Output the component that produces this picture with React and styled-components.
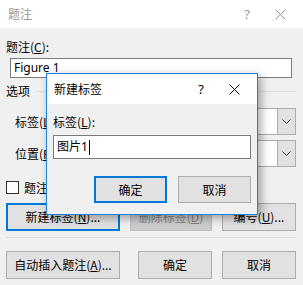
import React from 'react'
import styled, {createGlobalStyle} from 'styled-components'

const GlobalStyle = createGlobalStyle`
    html, body {
        margin: 0;
        padding: 0;
        background: #f0f0f0;
    }
    body {
        font-family: "Segoe UI", "Noto Sans", "Noto Sans CJK SC", sans-serif;
        font-size: 12px;
        color: #000;
    }
`

const Window = styled.div`
    position: relative;
    width: 303px;
    height: 285px;
    overflow: hidden;
    background: #f0f0f0;
`

const TitleBar = styled.div`
    display: flex;
    align-items: center;
    height: ${props => props.h}px;
    background: #fff;
    padding-left: ${props => props.pad}px;
    color: ${props => props.active ? '#000' : '#999'};
`

const TitleText = styled.span`
    flex: 1;
    font-family: "Noto Sans CJK SC", sans-serif;
    font-size: 12px;
    line-height: 16px;
`

const TitleButton = styled.span`
    display: flex;
    align-items: center;
    justify-content: center;
    width: ${props => props.w}px;
    font-size: 13px;
    line-height: 16px;
    font-family: "Noto Sans", sans-serif;
`

const Body = styled.div`
    display: flex;
    flex-direction: column;
    padding: 0 7px 0 6px;
`

const Label = styled.div`
    font-family: "Noto Sans CJK SC", sans-serif;
    line-height: 16px;
    margin-top: ${props => props.mt || 0}px;
    margin-left: ${props => props.ml || 0}px;
`

const TextInput = styled.div`
    box-sizing: border-box;
    height: ${props => props.h}px;
    width: ${props => props.w}px;
    margin-top: ${props => props.mt}px;
    margin-left: ${props => props.ml || 0}px;
    background: #fff;
    border: 1px solid #7a7a7a;
    display: flex;
    align-items: center;
    padding-left: 3px;
    font-family: "Noto Sans", "Noto Sans CJK SC", sans-serif;
    font-size: 12px;
    line-height: 16px;
`

const Caret = styled.span`
    display: inline-block;
    width: 1px;
    height: 15px;
    background: #000;
    margin-left: 1px;
`

const GroupHead = styled.div`
    display: flex;
    align-items: center;
    gap: 6px;
    margin-top: 5px;
    font-family: "Noto Sans CJK SC", sans-serif;
    line-height: 16px;
    &::after {
        content: "";
        flex: 1;
        height: 1px;
        background: #dcdcdc;
    }
`

const SelectRow = styled.div`
    display: flex;
    align-items: center;
    height: 27px;
    margin-top: ${props => props.mt}px;
    padding-left: 9px;
`

const SelectLabel = styled.span`
    width: 55px;
    font-family: "Noto Sans CJK SC", sans-serif;
    line-height: 16px;
`

const SelectBox = styled.div`
    flex: 1;
    display: flex;
    height: 100%;
    border: 1px solid #adadad;
    box-sizing: border-box;
    background: #fff;
`

const SelectArrow = styled.div`
    margin-left: auto;
    width: 17px;
    background: #e1e1e1;
    border-left: 1px solid #adadad;
    display: flex;
    align-items: center;
    justify-content: center;
`

const CheckRow = styled.label`
    display: flex;
    align-items: center;
    gap: 5px;
    margin-top: 14px;
    height: 13px;
    font-family: "Noto Sans CJK SC", sans-serif;
    line-height: 16px;
`

const CheckBox = styled.span`
    box-sizing: border-box;
    width: 13px;
    height: 13px;
    border: 1px solid #333;
    background: #fff;
`

const ButtonRow = styled.div`
    display: flex;
    margin-top: ${props => props.mt}px;
    justify-content: ${props => props.justify || 'flex-start'};
    gap: ${props => props.gap || 0}px;
`

const Button = styled.div`
    box-sizing: border-box;
    width: ${props => props.w}px;
    height: ${props => props.h || 28}px;
    margin-left: ${props => props.ml || 0}px;
    display: flex;
    align-items: center;
    justify-content: center;
    background: ${props => props.disabled ? '#cccccc' : '#e1e1e1'};
    color: ${props => props.disabled ? '#838383' : '#000'};
    border: ${props => props.primary ? '2px solid #0078d7' : props.disabled ? '1px solid #bfbfbf' : '1px solid #adadad'};
    font-family: "Noto Sans CJK SC", sans-serif;
    font-size: 12px;
    line-height: 16px;
    white-space: nowrap;
`

const Separator = styled.div`
    height: 1px;
    background: #dcdcdc;
    margin-top: 6px;
`

const SubDialog = styled.div`
    position: absolute;
    left: 46px;
    top: 73px;
    width: 212px;
    height: 142px;
    box-sizing: border-box;
    border: 1px solid #1883d7;
    background: #f0f0f0;
    box-shadow: 3px 3px 9px rgba(0, 0, 0, 0.35);
    display: flex;
    flex-direction: column;
`

const SubBody = styled.div`
    display: flex;
    flex-direction: column;
    padding: 0 6px;
`

const CloseIcon = ({color}) => (
    <svg width="11" height="11" viewBox="0 0 11 11">
        <path d="M0.5 0.5 L10.5 10.5 M10.5 0.5 L0.5 10.5" stroke={color} strokeWidth="1" fill="none" />
    </svg>
)

const Chevron = () => (
    <svg width="9" height="5" viewBox="0 0 9 5">
        <path d="M0.5 0.5 L4.5 4.5 L8.5 0.5" stroke="#333" strokeWidth="1" fill="none" />
    </svg>
)

export default function App() {
    return (
        <Window>
            <GlobalStyle />
            <TitleBar h={28} pad={8}>
                <TitleText>题注</TitleText>
                <TitleButton w={20}>?</TitleButton>
                <TitleButton w={46}><CloseIcon color="#999" /></TitleButton>
            </TitleBar>
            <Body>
                <Label mt={11}>题注(<u>C</u>):</Label>
                <TextInput h={20} w={282} mt={3} ml={4}>Figure 1</TextInput>
                <GroupHead>选项</GroupHead>
                <SelectRow mt={9}>
                    <SelectLabel>标签(<u>L</u>):</SelectLabel>
                    <SelectBox><SelectArrow><Chevron /></SelectArrow></SelectBox>
                </SelectRow>
                <SelectRow mt={5}>
                    <SelectLabel>位置(<u>P</u>):</SelectLabel>
                    <SelectBox><SelectArrow><Chevron /></SelectArrow></SelectBox>
                </SelectRow>
                <CheckRow>
                    <CheckBox />
                    题注中不包含标签(<u>E</u>)
                </CheckRow>
                <ButtonRow mt={9}>
                    <Button w={114} primary>新建标签(<u>N</u>)...</Button>
                    <Button w={82} ml={10} disabled>删除标签(<u>D</u>)</Button>
                    <Button w={74} ml={10}>编号(<u>U</u>)...</Button>
                </ButtonRow>
                <Separator />
                <ButtonRow mt={13}>
                    <Button w={114}>自动插入题注(<u>A</u>)...</Button>
                    <Button w={74} ml={18}>确定</Button>
                    <Button w={74} ml={10}>取消</Button>
                </ButtonRow>
            </Body>

            <SubDialog>
                <TitleBar h={30} pad={7} active>
                    <TitleText>新建标签</TitleText>
                    <TitleButton w={20}>?</TitleButton>
                    <TitleButton w={46}><CloseIcon color="#000" /></TitleButton>
                </TitleBar>
                <SubBody>
                    <Label mt={10}>标签(<u>L</u>):</Label>
                    <TextInput h={24} w={198} mt={5}>图片1<Caret /></TextInput>
                    <ButtonRow mt={17} justify="flex-end" gap={11}>
                        <Button w={73} h={27} primary>确定</Button>
                        <Button w={73} h={27}>取消</Button>
                    </ButtonRow>
                </SubBody>
            </SubDialog>
        </Window>
    )
}
